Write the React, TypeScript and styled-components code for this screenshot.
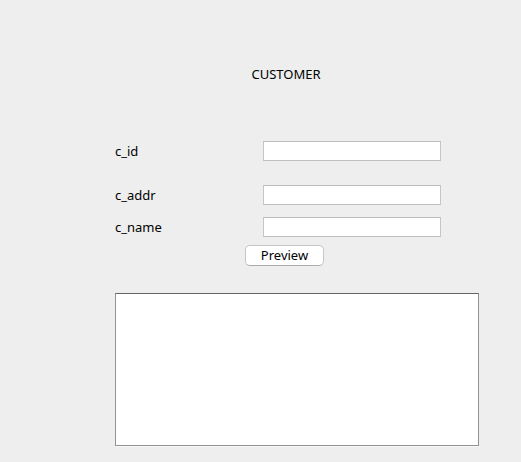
import React, { useState } from "react";
import styled, { createGlobalStyle } from "styled-components";

const GlobalStyle = createGlobalStyle`
  * { box-sizing: border-box; }
  body {
    margin: 0;
    background: #eeeeee;
    color: #000000;
    font: 13px/20px "Lucida Grande", "Noto Sans", sans-serif;
  }
`;

const Form = styled.form`
  display: flex;
  flex-direction: column;
  padding: 64px 42px 16px 115px;
`;

const Title = styled.h1`
  margin: 0 0 57px;
  padding-right: 22px;
  font-size: 13px;
  font-weight: 400;
  line-height: 20px;
  text-align: center;
`;

const Field = styled.div<{ $gap: number }>`
  display: grid;
  grid-template-columns: 148px 1fr;
  align-items: center;
  margin-bottom: ${({ $gap }) => $gap}px;
  padding-right: 38px;
`;

const Label = styled.label`
  line-height: 20px;
`;

const TextInput = styled.input`
  width: 100%;
  height: 20px;
  padding: 0 4px;
  border: 1px solid #bebebe;
  border-left-color: #c6c6c6;
  border-right-color: #c6c6c6;
  border-radius: 0;
  background: #ffffff;
  color: inherit;
  font: inherit;
  outline: none;
`;

const Actions = styled.div`
  display: flex;
  justify-content: center;
  margin-bottom: 27px;
  padding-right: 25px;
`;

const Button = styled.button`
  width: 79px;
  height: 21px;
  padding: 0;
  border: 1px solid #c6c6c6;
  border-bottom-color: #ababab;
  border-radius: 5px;
  background: #ffffff;
  color: inherit;
  font: inherit;
  line-height: 19px;
`;

const Output = styled.textarea`
  display: block;
  width: 100%;
  height: 153px;
  padding: 2px 4px;
  border: 1px solid #929292;
  border-top-color: #666666;
  border-radius: 0;
  background: #ffffff;
  box-shadow: 0 1px 0 #f8f8f8;
  color: inherit;
  font: inherit;
  outline: none;
  resize: none;
`;

const fields = [
  { name: "c_id", gap: 24 },
  { name: "c_addr", gap: 12 },
  { name: "c_name", gap: 8 },
];

export default function App() {
  const [values, setValues] = useState<Record<string, string>>({});
  const [preview, setPreview] = useState("");

  const handleSubmit = (event: React.FormEvent) => {
    event.preventDefault();
    setPreview(fields.map(({ name }) => `${name}: ${values[name] ?? ""}`).join("\n"));
  };

  return (
    <>
      <GlobalStyle />
      <Form onSubmit={handleSubmit}>
        <Title>CUSTOMER</Title>
        {fields.map(({ name, gap }) => (
          <Field key={name} $gap={gap}>
            <Label htmlFor={name}>{name}</Label>
            <TextInput
              id={name}
              type="text"
              autoComplete="off"
              value={values[name] ?? ""}
              onChange={(event) => setValues({ ...values, [name]: event.target.value })}
            />
          </Field>
        ))}
        <Actions>
          <Button type="submit">Preview</Button>
        </Actions>
        <Output aria-label="Preview output" readOnly value={preview} />
      </Form>
    </>
  );
}
